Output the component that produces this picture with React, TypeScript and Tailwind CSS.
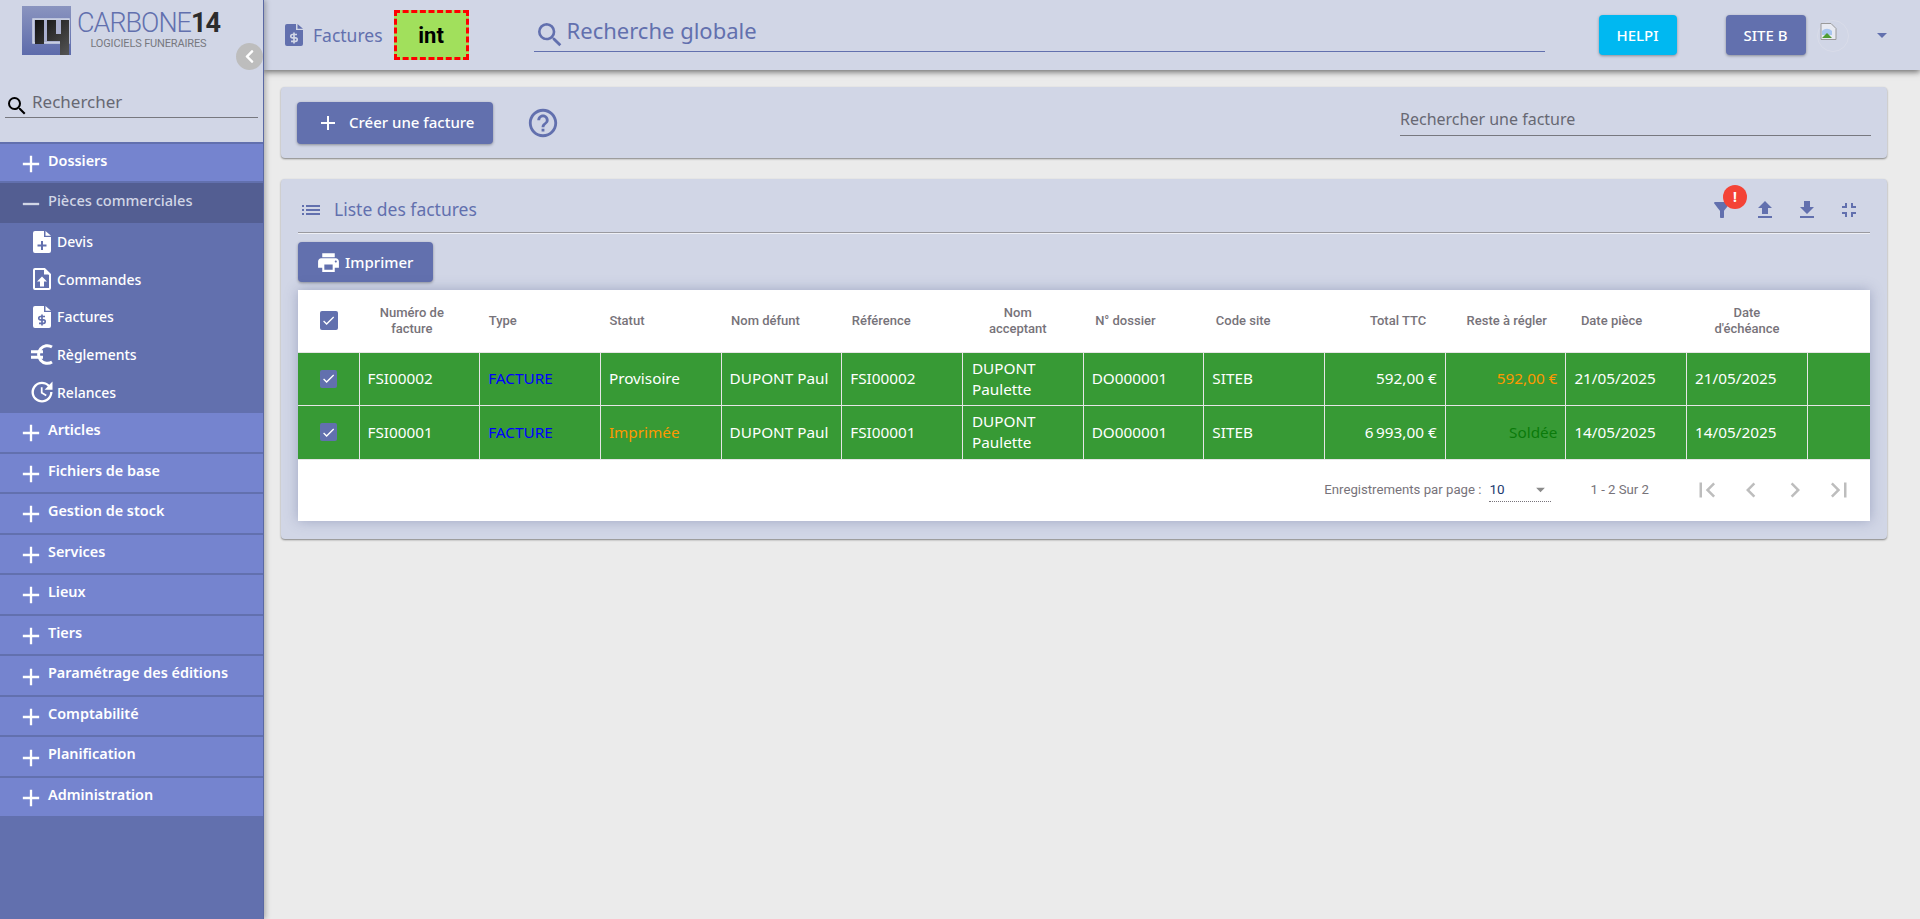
import React from 'react';
import {
  MdAdd, MdRemove, MdSearch, MdHelpOutline, MdList, MdFilterAlt, MdFileUpload, MdFileDownload,
  MdFullscreenExit, MdPrint, MdCheck, MdFirstPage, MdLastPage, MdChevronLeft, MdChevronRight, MdArrowDropDown,
  MdUpdate,
} from 'react-icons/md';
import { FaChevronLeft } from 'react-icons/fa';

const topItems = ['Articles', 'Fichiers de base', 'Gestion de stock', 'Services', 'Lieux', 'Tiers', 'Paramétrage des éditions', 'Comptabilité', 'Planification', 'Administration'];

// file glyph used in the menu and the page title, the mark is cut out with the background colour
function FileIcon({ cut, children, className }: { cut: string; children: React.ReactNode; className?: string }) {
  return (
    <svg width="18" height="22" viewBox="0 0 18 22" className={className}>
      <path d="M2 0h9v6h7v14a2 2 0 0 1-2 2H2a2 2 0 0 1-2-2V2a2 2 0 0 1 2-2zM12.5 0L18 4.7h-5.5z" fill="currentColor" />
      <g fill="none" stroke={cut} strokeWidth="2">{children}</g>
    </svg>
  );
}

const dollar = (cut: string) => (
  <FileIcon cut={cut}>
    <path d="M12 10.5H7.5a1.6 1.6 0 0 0 0 3.4h3a1.6 1.6 0 0 1 0 3.4H6M9 8.5v11" strokeWidth="1.7" />
  </FileIcon>
);

const cutColor = '#6270ae';

const subItems = [
  {
    label: 'Devis',
    icon: (
      <FileIcon cut={cutColor}>
        <path d="M9 10v9M4.5 14.5h9" />
      </FileIcon>
    ),
  },
  {
    label: 'Commandes',
    icon: (
      <svg width="18" height="22" viewBox="0 0 18 22">
        <path d="M2 1h9.5L17 6.5V20a1 1 0 0 1-1 1H2a1 1 0 0 1-1-1V2a1 1 0 0 1 1-1z" fill="none" stroke="currentColor" strokeWidth="2" />
        <path d="M9 8.5l5 5h-3v5H7v-5H4zM11 1v5.5h6z" fill="currentColor" />
      </svg>
    ),
  },
  { label: 'Factures', icon: dollar(cutColor) },
  {
    label: 'Règlements',
    icon: (
      <svg width="22" height="21" viewBox="0 0 22 21" fill="none" stroke="currentColor" strokeWidth="3">
        <path d="M21 3A8.8 8.8 0 1 0 21 18M0 7.8h12M0 13.2h12" />
      </svg>
    ),
  },
  { label: 'Relances', icon: <MdUpdate className="text-[28px]" /> },
];

const columns = [
  { label: 'Numéro de facture', cls: 'pl-[18px] pr-[33px]' },
  { label: 'Type', cls: 'pl-[9px] text-left' },
  { label: 'Statut', cls: 'pl-[9px] text-left' },
  { label: 'Nom défunt', cls: 'pl-[10px] text-left' },
  { label: 'Référence', cls: 'pl-[10px] text-left' },
  { label: 'Nom acceptant', cls: 'pl-[22px] pr-[32px]' },
  { label: 'N° dossier', cls: 'pl-[12px] text-left' },
  { label: 'Code site', cls: 'pl-[12px] text-left' },
  { label: 'Total TTC', cls: 'pr-[19px] text-right' },
  { label: 'Reste à régler', cls: 'pr-[19px] text-right' },
  { label: 'Date pièce', cls: 'pl-[15px] text-left' },
  { label: "Date d'échéance", cls: 'px-[24px]' },
];

const rows = [
  { num: 'FSI00002', statut: 'Provisoire', statutCls: 'text-white', ref: 'FSI00002', total: '592,00 €', reste: '592,00 €', resteCls: 'text-[#ff9800]', date: '21/05/2025' },
  { num: 'FSI00001', statut: 'Imprimée', statutCls: 'text-[#ff9800]', ref: 'FSI00001', total: '6\u202f993,00 €', reste: 'Soldée', resteCls: 'text-[#0b7a0b]', date: '14/05/2025' },
];

function Check({ small }: { small?: boolean }) {
  return (
    <span className={`mx-auto flex items-center justify-center rounded-[2px] bg-[#6270ae] text-white ${small ? 'h-[18px] w-[17px]' : 'h-[19px] w-[18px]'}`}>
      <MdCheck className="text-[15px]" />
    </span>
  );
}

function Logo() {
  return (
    <div className="flex items-start pl-[22px] pt-[6px]">
      <svg width="49" height="49" viewBox="0 0 49 49" className="shrink-0">
        <defs>
          <linearGradient id="lg" x1="0" y1="0" x2="0" y2="1">
            <stop offset="0" stopColor="#8a94bf" />
            <stop offset="1" stopColor="#5d6bab" />
          </linearGradient>
          <linearGradient id="lk" x1="0" y1="0" x2="1" y2="1">
            <stop offset="0" stopColor="#111" />
            <stop offset="1" stopColor="#555" />
          </linearGradient>
        </defs>
        <rect width="49" height="49" fill="url(#lg)" />
        <path d="M11 13h36v24h-36z" fill="#aab0cf" stroke="#d1d6e6" strokeWidth="1.5" />
        <path d="M13 14h9v24h-9zM25 14h9v14h5V14h8v35h-9V35H25z" fill="url(#lk)" />
      </svg>
      <div className="ml-[6px] flex flex-col items-center pt-[4px]">
        <div className="font-['Roboto',sans-serif] text-[27px] leading-[26px] font-light tracking-[-1px] text-[#6270ae] whitespace-nowrap">
          CARBONE<span className="font-bold text-[#2c2c2c]">14</span>
        </div>
        <div className="mt-[1px] font-['Roboto',sans-serif] text-[11px] leading-[13px] text-[#77787f] tracking-[-0.15px] whitespace-nowrap">LOGICIELS FUNERAIRES</div>
      </div>
    </div>
  );
}

function Sidebar() {
  return (
    <aside className="relative z-20 flex h-[919px] w-[264px] shrink-0 flex-col border-r border-[#5a68a3] bg-[#d1d6e6] shadow-[2px_0_5px_rgba(0,0,0,0.25)]">
      <Logo />
      <button className="absolute left-[236px] top-[43px] flex h-[27px] w-[27px] items-center justify-center rounded-full bg-[#bdbdbd] text-white">
        <FaChevronLeft className="text-[15px]" />
      </button>
      <div className="mx-[5px] mt-[33px] flex h-[30px] w-[253px] items-center border-b border-[#77787f]">
        <MdSearch className="mt-[6px] text-[24px] text-black" />
        <span className="ml-[3px] mb-[2px] text-[17px] text-[#676873]">Rechercher</span>
      </div>
      <nav className="mt-[24px] flex flex-1 flex-col bg-[#6270ae] font-semibold text-white">
        <div className="flex h-[41px] shrink-0 items-center border-y-[2px] border-[#6270ae] bg-[#7584cf] pl-[23px] text-[14.4px]">
          <MdAdd className="-ml-[6px] mt-[2px] text-[28px]" />
          <span className="ml-[3px] -mt-[3px]">Dossiers</span>
        </div>
        <div className="flex h-[40px] shrink-0 items-center bg-[#535e92] pl-[23px] text-[14.6px] font-medium text-[#d1d6e6]">
          <MdRemove className="-ml-[6px] mt-[2px] text-[28px]" />
          <span className="ml-[3px] -mt-[4px]">Pièces commerciales</span>
        </div>
        <div className="flex h-[190px] shrink-0 flex-col font-medium">
          {subItems.map((s) => (
            <div key={s.label} className="flex h-[37.6px] items-center pl-[26px]">
              <span className="flex w-[31px] justify-center">{s.icon}</span>
              <span className="text-[14px]">{s.label}</span>
            </div>
          ))}
        </div>
        {topItems.map((label) => (
          <div key={label} className="flex h-[40.55px] shrink-0 items-center border-b-[2.5px] border-[#6270ae] bg-[#7584cf] pl-[23px] text-[14.4px] last:h-[38px] last:border-b-0">
            <MdAdd className="-ml-[6px] mt-[2px] text-[28px]" />
            <span className="ml-[3px] -mt-[5px]">{label}</span>
          </div>
        ))}
      </nav>
    </aside>
  );
}

function Header() {
  return (
    <header className="relative z-10 flex h-[70px] shrink-0 items-center bg-[#d1d6e6] shadow-[0_2px_6px_rgba(0,0,0,0.55)]">
      <span className="ml-[21px] text-[#6270ae]">{dollar('#d1d6e6')}</span>
      <span className="ml-[10px] text-[17.5px] text-[#6270ae]">Factures</span>
      <div className="ml-[11px] flex h-[50px] w-[75px] items-center justify-center border-[3px] border-dashed border-[#ff0000] bg-[#a1e05c] font-['Roboto',sans-serif] text-[22px] font-bold text-black">int</div>
      <div className="ml-[65px] mb-[8px] flex h-[41px] w-[1011px] items-center border-b border-[#6270ae] text-[#6270ae]">
        <MdSearch className="mt-[8px] text-[32px]" />
        <span className="-mt-[1px] ml-[1px] text-[22px]">Recherche globale</span>
      </div>
      <button className="ml-[54px] h-[40px] w-[78px] rounded-[4px] bg-[#00b8f1] text-[15px] font-medium text-white shadow-[0_1px_3px_rgba(0,0,0,0.35)]">HELPI</button>
      <button className="ml-[49px] h-[40px] w-[80px] rounded-[4px] bg-[#6270ae] text-[15px] font-medium text-white shadow-[0_1px_3px_rgba(0,0,0,0.35)]">SITE B</button>
      <div className="relative ml-[11px] mt-[2px] h-[32px] w-[32px] rounded-full border border-[#d9dce9]">
        <svg width="17" height="17" viewBox="0 0 17 17" className="absolute left-[2px] top-[2px]">
          <path d="M1 .5h10l5 5v11H1z" fill="#e8eaf2" stroke="#9a9a9a" />
          <path d="M2 8c3-3 7-3 10 0v4H2z" fill="#a9c6ee" />
          <path d="M2 15l5-5 5 5z" fill="#4f9d33" />
        </svg>
      </div>
      <MdArrowDropDown className="ml-[21px] text-[24px] text-[#6270ae]" />
    </header>
  );
}

function Table() {
  return (
    <div className="mt-[8px] bg-white shadow-[0_0_12px_rgba(70,80,130,0.35)]">
      <table className="w-[1572px] table-fixed border-collapse font-['Noto_Sans',sans-serif]">
        <thead>
          <tr className="h-[62px] font-['Roboto',sans-serif] text-[13px] leading-[16px] text-[#77737a]">
            <th className="w-[61px] font-medium"><Check /></th>
            {columns.map((c) => (
              <th key={c.label} className={`w-[120.7px] font-medium ${c.cls}`}>
                {c.label}
              </th>
            ))}
            <th />
          </tr>
        </thead>
        <tbody className="text-[15.3px] leading-[21px] text-white">
          {rows.map((r) => (
            <tr key={r.num} className="h-[53.5px] border-y border-[#e6e6e6] bg-[#379a35]">
              <td className="border-r border-[#e6e6e6]"><Check small /></td>
              <td className="border-r border-[#e6e6e6] pl-[8px]">{r.num}</td>
              <td className="border-r border-[#e6e6e6] pl-[8px] text-[#0000ff]">FACTURE</td>
              <td className={`border-r border-[#e6e6e6] pl-[8px] ${r.statutCls}`}>{r.statut}</td>
              <td className="border-r border-[#e6e6e6] pl-[8px]">DUPONT Paul</td>
              <td className="border-r border-[#e6e6e6] pl-[8px]">{r.ref}</td>
              <td className="border-r border-[#e6e6e6] pl-[9px]">DUPONT Paulette</td>
              <td className="border-r border-[#e6e6e6] pl-[8px]">DO000001</td>
              <td className="border-r border-[#e6e6e6] pl-[8px]">SITEB</td>
              <td className="border-r border-[#e6e6e6] pr-[8px] text-right">{r.total}</td>
              <td className={`border-r border-[#e6e6e6] pr-[8px] text-right ${r.resteCls}`}>{r.reste}</td>
              <td className="border-r border-[#e6e6e6] pl-[8px]">{r.date}</td>
              <td className="border-r border-[#e6e6e6] pl-[8px]">{r.date}</td>
              <td />
            </tr>
          ))}
        </tbody>
      </table>
      <div className="flex h-[61px] items-center justify-end font-['Roboto',sans-serif] text-[13.2px] text-[#77737a]">
        <span>Enregistrements par page :</span>
        <div className="ml-[8px] flex h-[24px] w-[62px] items-center justify-between border-b border-dotted border-[#77737a] text-[#1c3a70]">
          <span className="text-[13.5px]">10</span>
          <MdArrowDropDown className="text-[21px] text-[#8a8a8a]" />
        </div>
        <span className="ml-[39px]">1 - 2 Sur 2</span>
        <div className="ml-[43px] mr-[16px] flex w-[162px] items-center justify-between text-[30px] text-[#bdbdbd]">
          <MdFirstPage />
          <MdChevronLeft />
          <MdChevronRight />
          <MdLastPage />
        </div>
      </div>
    </div>
  );
}

export default function App() {
  return (
    <div className="flex h-[919px] w-[1920px] overflow-hidden bg-[#ebebeb] font-['Noto_Sans',sans-serif]">
      <Sidebar />
      <div className="flex min-w-0 flex-1 flex-col">
        <Header />
        <main className="flex flex-col gap-[21px] pl-[17px] pr-[33px] pt-[17px]">
          <section className="flex h-[71px] items-center rounded-[4px] bg-[#d1d6e6] px-[16px] shadow-[0_1px_2px_rgba(0,0,0,0.45)]">
            <button className="flex h-[42px] w-[196px] items-center rounded-[4px] bg-[#6270ae] pl-[19px] text-[15px] font-medium text-white shadow-[0_1px_3px_rgba(0,0,0,0.35)]">
              <MdAdd className="text-[24px]" />
              <span className="ml-[9px]">Créer une facture</span>
            </button>
            <MdHelpOutline className="ml-[33px] text-[34px] text-[#6270ae]" />
            <div className="ml-auto mb-[10px] flex h-[36px] w-[471px] items-center border-b border-[#77787f] pt-[3px] text-[16px] text-[#676873]">Rechercher une facture</div>
          </section>
          <section className="h-[360px] rounded-[4px] bg-[#d1d6e6] px-[17px] shadow-[0_1px_2px_rgba(0,0,0,0.45)]">
            <div className="relative flex h-[54px] items-center border-b border-[#9a9aa0] text-[#6270ae] shadow-[0_1px_0_#eef0f6]">
              <MdList className="ml-[1px] mt-[8px] text-[24px]" />
              <span className="ml-[11px] mt-[8px] text-[17.5px]">Liste des factures</span>
              <div className="ml-auto mr-[9px] mt-[8px] flex items-center gap-[18px] text-[24px]">
                <span className="relative mr-[1px]">
                  <MdFilterAlt />
                  <span className="absolute left-[13px] top-[-13px] flex h-[24px] w-[24px] items-center justify-center rounded-full bg-[#f44336] text-[14px] font-bold text-white">!</span>
                </span>
                <MdFileUpload />
                <MdFileDownload />
                <MdFullscreenExit />
              </div>
            </div>
            <button className="mt-[9px] flex h-[40px] w-[135px] items-center rounded-[4px] bg-[#6270ae] pl-[18px] text-[15px] font-medium text-white shadow-[0_1px_3px_rgba(0,0,0,0.35)]">
              <MdPrint className="text-[25px]" />
              <span className="ml-[4px]">Imprimer</span>
            </button>
            <Table />
          </section>
        </main>
      </div>
    </div>
  );
}
